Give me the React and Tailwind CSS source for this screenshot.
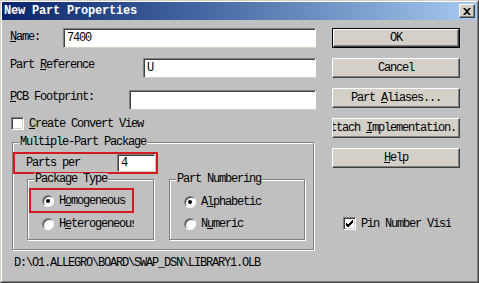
const txt = "font-['Liberation_Mono','DejaVu_Sans_Mono',monospace] text-[12px] leading-[12px] tracking-[-1.2px] text-black";

function U({ children }) {
  return <span className="underline underline-offset-[1px]">{children}</span>;
}

function TextBox({ className = '', children }) {
  return (
    <div className={`bg-white border border-t-[#808080] border-l-[#808080] border-r-white border-b-[#d4d0c8] shadow-[inset_1px_1px_0_#404040] flex items-center pl-[3px] overflow-hidden ${className}`}>
      <span className={txt}>{children}</span>
    </div>
  );
}

function CheckBox({ checked }) {
  return (
    <div className="w-[13px] h-[13px] shrink-0 bg-white border border-t-[#808080] border-l-[#808080] border-r-white border-b-white shadow-[inset_1px_1px_0_#404040,inset_-1px_-1px_0_#d4d0c8] flex items-center justify-center">
      {checked && (
        <svg width="9" height="9" viewBox="0 0 9 9">
          <path d="M1 4 L3 6 L8 1 M1 5 L3 7 L8 2 M1 6 L3 8 L8 3" stroke="#000" strokeWidth="1" fill="none" />
        </svg>
      )}
    </div>
  );
}

function Radio({ checked }) {
  return (
    <div className="w-[12px] h-[12px] shrink-0 rounded-full bg-white border border-t-[#808080] border-l-[#808080] border-r-white border-b-white shadow-[inset_1px_1px_0_#404040] flex items-center justify-center">
      {checked && <div className="w-[4px] h-[4px] rounded-full bg-black" />}
    </div>
  );
}

function Group({ label, className = '', children }) {
  return (
    <div className={`relative border border-[#808080] shadow-[inset_1px_1px_0_#fff,1px_1px_0_#fff] ${className}`}>
      <span className={`absolute -top-[7px] left-[6px] bg-[#c0c0c0] px-[1px] ${txt}`}>{label}</span>
      {children}
    </div>
  );
}

function Button({ isDefault, children }) {
  return (
    <div className={`w-[128px] h-[20px] ${isDefault ? 'border border-black' : ''}`}>
      <div className="w-full h-full bg-[#d4d0c8] border border-t-white border-l-white border-r-[#404040] border-b-[#404040] shadow-[inset_-1px_-1px_0_#808080] flex items-center justify-center overflow-hidden">
        <span className={`whitespace-nowrap ${txt}`}>{children}</span>
      </div>
    </div>
  );
}

export default function App() {
  return (
    <div className="w-[479px] h-[283px] bg-[#c0c0c0] border border-t-[#d4d0c8] border-l-[#d4d0c8] border-r-[#404040] border-b-[#404040]">
      <div className="w-full h-full border border-t-white border-l-white border-r-[#808080] border-b-[#808080] flex flex-col">
        <div className="h-[18px] shrink-0 bg-gradient-to-r from-[#0a246a] to-[#a6caf0] flex items-center justify-between pl-[2px] pr-[2px]">
          <span className="font-['Liberation_Mono',monospace] font-bold text-[12px] leading-[12px] tracking-[-0.2px] text-white">New Part Properties</span>
          <div className="w-[16px] h-[14px] bg-[#d4d0c8] border border-t-white border-l-white border-r-[#404040] border-b-[#404040] shadow-[inset_-1px_-1px_0_#808080] flex items-center justify-center">
            <svg width="8" height="7" viewBox="0 0 8 7">
              <path d="M0 0 L2 0 L4 2 L6 0 L8 0 L5 3.5 L8 7 L6 7 L4 5 L2 7 L0 7 L3 3.5 Z" fill="#000" />
            </svg>
          </div>
        </div>

        <div className="flex flex-1">
          <div className="w-[318px] pl-[8px] flex flex-col">
            <div className="flex items-start mt-[8px]">
              <span className={`w-[53px] mt-[3px] ${txt}`}><U>N</U>ame:</span>
              <TextBox className="w-[253px] h-[20px]">7400</TextBox>
            </div>
            <div className="flex items-start mt-[10px]">
              <span className={`w-[133px] mt-[1px] ${txt}`}>Part <U>R</U>eference</span>
              <TextBox className="w-[173px] h-[20px]">U</TextBox>
            </div>
            <div className="flex items-start mt-[12px]">
              <span className={`w-[119px] mt-[1px] ${txt}`}><U>P</U>CB Footprint:</span>
              <TextBox className="w-[187px] h-[20px]"></TextBox>
            </div>
            <div className="flex items-center mt-[7px] ml-[1px] gap-[5px]">
              <CheckBox />
              <span className={txt}><U>C</U>reate Convert View</span>
            </div>

            <Group label="Multiple-Part Package" className="mt-[12px] ml-[2px] w-[302px] h-[108px] flex flex-col">
              <div className="mt-[9px] w-[145px] h-[22px] border-2 border-[#d41a1f] flex items-center">
                <span className={`pl-[11px] ${txt}`}>Parts per</span>
                <TextBox className="ml-auto mr-[1px] w-[38px] h-[18px]">4</TextBox>
              </div>
              <div className="flex mt-[5px]">
                <Group label="Package Type" className="ml-[14px] w-[127px] h-[61px] flex flex-col">
                  <div className="mt-[8px] ml-[1px] w-[105px] h-[25px] border-2 border-[#d41a1f] flex items-center pl-[11px] gap-[5px]">
                    <Radio checked />
                    <span className={txt}>H<U>o</U>mogeneous</span>
                  </div>
                  <div className="h-[22px] flex items-center pl-[14px] gap-[5px]">
                    <Radio />
                    <span className={`w-[75px] overflow-hidden whitespace-nowrap ${txt}`}>H<U>e</U>terogeneous</span>
                  </div>
                </Group>
                <Group label="Part Numbering" className="ml-[15px] w-[136px] h-[61px] flex flex-col">
                  <div className="mt-[10px] h-[23px] flex items-center pl-[14px] gap-[5px]">
                    <Radio checked />
                    <span className={txt}>A<U>l</U>phabetic</span>
                  </div>
                  <div className="h-[22px] flex items-center pl-[14px] gap-[5px]">
                    <Radio />
                    <span className={txt}>N<U>u</U>meric</span>
                  </div>
                </Group>
              </div>
            </Group>

            <span className={`mt-[7px] ml-[4px] ${txt}`}>D:\O1.ALLEGRO\BOARD\SWAP_DSN\LIBRARY1.OLB</span>
          </div>

          <div className="ml-[12px] flex flex-col">
            <div className="mt-[8px] flex flex-col gap-[10px]">
              <Button isDefault>OK</Button>
              <Button>Cancel</Button>
              <Button>Part <U>A</U>liases...</Button>
              <Button>Attach <U>I</U>mplementation...</Button>
              <Button><U>H</U>elp</Button>
            </div>
            <div className="flex items-center mt-[49px] ml-[11px] gap-[5px]">
              <CheckBox checked />
              <span className={`w-[90px] overflow-hidden whitespace-nowrap ${txt}`}>Pin Number Visible</span>
            </div>
          </div>
        </div>
      </div>
    </div>
  );
}
